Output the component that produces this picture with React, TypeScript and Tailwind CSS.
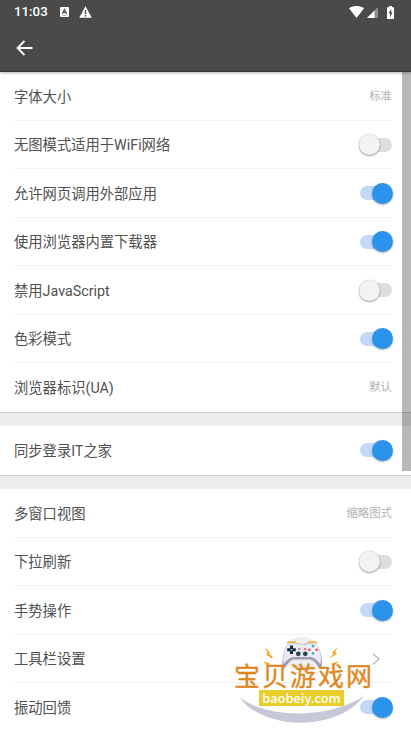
import React from 'react';

type RowData = {
  label: string;
  value?: string;
  on?: boolean;
  arrow?: boolean;
};

const pageRows: RowData[] = [
  { label: '字体大小', value: '标准' },
  { label: '无图模式适用于WiFi网络', on: false },
  { label: '允许网页调用外部应用', on: true },
  { label: '使用浏览器内置下载器', on: true },
  { label: '禁用JavaScript', on: false },
  { label: '色彩模式', on: true },
  { label: '浏览器标识(UA)', value: '默认' },
];

const syncRows: RowData[] = [{ label: '同步登录IT之家', on: true }];

const viewRows: RowData[] = [
  { label: '多窗口视图', value: '缩略图式' },
  { label: '下拉刷新', on: false },
  { label: '手势操作', on: true },
  { label: '工具栏设置', arrow: true },
  { label: '振动回馈', on: true },
];

const Toggle = ({ on }: { on: boolean }) => (
  <button
    role="switch"
    aria-checked={on}
    className={`flex h-[14px] w-8 items-center rounded-full ${on ? 'justify-end bg-[#c2d8fa]' : 'justify-start bg-[#dedede]'}`}
  >
    <span
      className={`size-[21px] shrink-0 rounded-full ${
        on
          ? '-mr-px bg-[#2b93ec] shadow-[0_1px_2px_rgba(0,0,0,0.3)]'
          : '-ml-px bg-[#f3f3f3] shadow-[0_1px_2px_rgba(0,0,0,0.35),0_0_1px_rgba(0,0,0,0.3)]'
      }`}
    />
  </button>
);

const Row = ({ label, value, on, arrow }: RowData) => (
  <div className="flex h-[48.5px] items-center justify-between border-b border-[#f1f1f1] pt-px last:border-transparent">
    <span className="pt-px text-[14.3px] leading-5 text-[#505050]">{label}</span>
    {value && <span className="text-[11.4px] leading-4 text-[#b3b3b3]">{value}</span>}
    {on !== undefined && <Toggle on={on} />}
    {arrow && (
      <svg className="mr-3 h-3 w-2" viewBox="0 0 8 12" fill="none" stroke="#b9b9b9" strokeWidth="1.3">
        <path d="M1 .8 7 6 1 11.2" />
      </svg>
    )}
  </div>
);

const Section = ({ rows }: { rows: RowData[] }) => (
  <section className="pl-[14px] pr-[19px]">
    {rows.map((row) => (
      <Row key={row.label} {...row} />
    ))}
  </section>
);

const Divider = () => <div className="h-[14.5px] shrink-0 border-t border-[#cfcfcf] bg-[#ededed]" />;

const StatusBar = () => (
  <div className="flex h-6 items-center pl-[14px] pr-[18px] text-white">
    <span className="w-[46px] text-[13.3px] font-medium leading-6">11:03</span>
    <svg className="h-[10px] w-[9px]" viewBox="0 0 9 10">
      <rect width="9" height="10" rx="1" fill="#fff" />
      <path d="M2.3 7 4.5 2.5 6.7 7M3.2 5.4h2.6" fill="none" stroke="#484848" strokeWidth="1.1" />
      <path d="M2 8.4h5" stroke="#484848" strokeWidth=".4" />
    </svg>
    <svg className="ml-[10px] h-3 w-[13px]" viewBox="0 0 13 12">
      <path d="M6.5.3 12.8 11.7H.2Z" fill="#fff" />
      <path d="M6.5 4v4M6.5 9.1v1.3" stroke="#484848" strokeWidth="1.3" />
    </svg>
    <svg className="ml-auto h-[12px] w-[15px]" viewBox="0 0 15 12">
      <path d="M0 2.3C4.3-.8 10.7-.8 15 2.3L7.5 12Z" fill="#fff" />
    </svg>
    <svg className="ml-[3px] h-[11px] w-[11px]" viewBox="0 0 11 11">
      <path d="M11 0v11H0Z" fill="#8c8c8c" />
      <path d="M7.5 3.5V11H0Z" fill="#fff" />
    </svg>
    <svg className="ml-[9px] mr-[-1px] h-[13px] w-[7px]" viewBox="0 0 7 13">
      <path d="M2 0h3v1.2h2V13H0V1.2h2Z" fill="#fff" />
      <path d="M4.2 3 1.5 7.2h1.6V11l2.5-4.6H4.2Z" fill="#484848" />
    </svg>
  </div>
);

const GamepadIcon = () => (
  <svg className="absolute left-0 top-0 h-[90px] w-[140px]" viewBox="0 0 140 90">
    <circle cx="68" cy="19" r="17.5" fill="#eeeeee" />
    {/* Grips and body */}
    <path d="M48.500 34 C48 28 49 13 54 9.500 Q61 7 68 9.500 Q75 7 82 9.500 C87 13 89 28 87.500 34 C84 35 83 26 76 24.500 H60 C53 26 52 35 48.500 34Z" fill="#9c9db2" />
    <path d="M49.500 29 C48.500 24 50 12 54.500 9.500 Q61 7.500 65 9.500 H71 Q76 7.500 81.500 9.500 C86 12 88 24 86.500 29 C84 27 82 23 77 22 H59 C54 23 52 27 49.500 29Z" fill="#e9eaf3" />
    <path d="M53 8.2 55 7h7M74 7h7l2 1.2" fill="none" stroke="#efac28" strokeWidth="1.5" />
    <path d="M57.5 10.5v8.6M53.2 14.8h8.6" stroke="#1f2c40" strokeWidth="3" />
    <circle cx="57.5" cy="14.8" r="1.1" fill="#56b5d4" />
    <circle cx="64.3" cy="18.8" r="2.4" fill="#2f4452" />
    <circle cx="71.3" cy="18.8" r="2.4" fill="#2f4452" />
    <path d="M64 14h2.4M70 14h2.4" stroke="#e36278" strokeWidth="1.3" />
    <circle cx="79" cy="14.8" r="5.2" fill="#f8f8fc" />
    <circle cx="79" cy="11.2" r="1.4" fill="#46a8c8" />
    <circle cx="75.4" cy="14.8" r="1.4" fill="#e94b57" />
    <circle cx="82.6" cy="14.8" r="1.4" fill="#e94b57" />
    <circle cx="79" cy="18.4" r="1.4" fill="#46a8c8" />
    <g fill="#f3a51f">
      <path d="m30 12 6 5.500-1 1.300 4 3-1 1 .5 1.200-6.500-4.500 1.700-1.500Z" />
      <path d="m104 12-6 5.500 1.500 1.300-4.500 5.200 8-5.500-2-1.500Z" />
      <path d="m29 26.500 3 .800 4.500 1.500-3.500 1.600Z" />
      <path d="m104.500 26.500-3 .800-4.500 1.500 3.500 1.600Z" />
    </g>
    <path d="M5 62 C34 84 96 84 130 61 C104 96 31 97 5 62Z" fill="#c6c8d8" />
  </svg>
);

const SiteBadge = () => (
  <div className="absolute left-[234px] top-[635px] h-[90px] w-[140px]">
    <GamepadIcon />
    <div className="absolute left-0 top-[29px] flex w-[138px] justify-between text-[26px] leading-[27px] text-[#df861b] [-webkit-text-stroke:0.3px_#df861b]">
      {['宝', '贝', '游', '戏', '网'].map((ch) => (
        <span key={ch}>{ch}</span>
      ))}
    </div>
    <div className="absolute left-[25px] top-[55px] flex h-4 w-[85px] items-center justify-center bg-[#ebcd29] pb-px font-['Noto_Sans_CJK_SC',sans-serif] text-[12.8px] font-medium leading-[15px] text-white">
      baobeiy.com
    </div>
  </div>
);

const App = () => {
  return (
    <main className="relative h-[732px] w-[411px] overflow-hidden bg-white font-[Roboto,'Noto_Sans_CJK_SC',sans-serif]">
      <header className="relative h-[72px] border-b border-[#383838] bg-[#4a4a4a] shadow-[0_1px_3px_rgba(0,0,0,0.3)]">
        <StatusBar />
        <button className="ml-[16px] mt-4 block" aria-label="返回">
          <svg className="h-4 w-[17px]" viewBox="0 0 17 16" fill="none" stroke="#fff" strokeWidth="1.8">
            <path d="M16.5 8H1.7M8.5 1 1.5 8l7 7" />
          </svg>
        </button>
      </header>

      <Section rows={pageRows} />
      <Divider />
      <Section rows={syncRows} />
      <Divider />
      <Section rows={viewRows} />

      {/* Scroll thumb */}
      <div className="absolute right-0 top-[72px] h-[399px] w-[9px] bg-black/28" />
      <SiteBadge />
    </main>
  );
};

export default App;
